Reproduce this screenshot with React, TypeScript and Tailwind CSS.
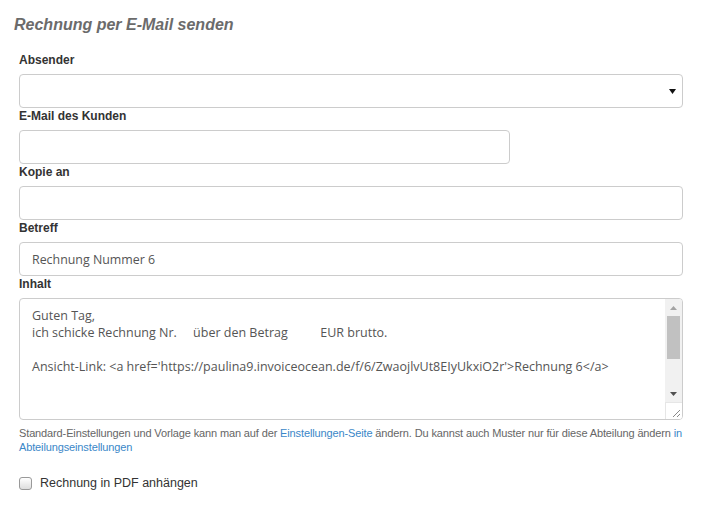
import React from 'react';

const labelCls = "block text-[12px] leading-[14px] font-bold text-[#333] mt-[1px] mb-[7px]";
const inputCls = "block h-[34px] border border-[#ccc] rounded-[4px] bg-white px-[12px] text-[12.4px] text-[#555] font-['Open_Sans',sans-serif] outline-none";

export default function App() {
  return (
    <div className="w-[704px] h-[515px] bg-white font-['Liberation_Sans',Arial,sans-serif] pl-[19px] pr-[21px] pt-[14px]">
      <h2 className="-ml-[5px] text-[16px] leading-[22px] font-bold italic text-[#6b6b6b] mb-[17px]">
        Rechnung per E-Mail senden
      </h2>

      {/* Absender */}
      <label className={labelCls}>Absender</label>
      <div className={`${inputCls} w-full flex items-center justify-end pr-[6px]`}>
        <svg width="7" height="5" viewBox="0 0 7 5"><path d="M0 0h7L3.5 5z" fill="#111" /></svg>
      </div>

      <label className={labelCls}>E-Mail des Kunden</label>
      <input className={`${inputCls} w-[491px]`} defaultValue="" />

      <label className={labelCls}>Kopie an</label>
      <input className={`${inputCls} w-full`} defaultValue="" />

      <label className={labelCls}>Betreff</label>
      <input className={`${inputCls} w-full`} defaultValue="Rechnung Nummer 6" />

      <label className={labelCls}>Inhalt</label>
      <div className="flex h-[122px] border border-[#ccc] rounded-[4px] overflow-hidden">
        <div className="flex-1 px-[12px] pt-[8px] text-[12.5px] leading-[17px] text-[#555] font-['Open_Sans',sans-serif] whitespace-pre">
          {"Guten Tag,\nich schicke Rechnung Nr.     über den Betrag          EUR brutto.\n\nAnsicht-Link: <a href='https://paulina9.invoiceocean.de/f/6/ZwaojlvUt8EIyUkxiO2r'>Rechnung 6</a>"}
        </div>
        <div className="w-[17px] flex flex-col bg-[#f1f1f1]">
          <div className="h-[17px] flex items-center justify-center">
            <svg width="7" height="4" viewBox="0 0 7 4"><path d="M0 4h7L3.5 0z" fill="#a3a3a3" /></svg>
          </div>
          <div className="mx-[2px] h-[43px] bg-[#c1c1c1]" />
          <div className="flex-1" />
          <div className="h-[17px] flex items-center justify-center">
            <svg width="7" height="4" viewBox="0 0 7 4"><path d="M0 0h7L3.5 4z" fill="#505050" /></svg>
          </div>
          <div className="h-[17px] bg-white border-t border-l border-[#e6e6e6] flex items-end justify-end p-[2px]">
            <svg width="8" height="8" viewBox="0 0 8 8"><path d="M8 1L1 8M8 5L5 8" stroke="#888" strokeWidth="1" /></svg>
          </div>
        </div>
      </div>

      <p className="mt-[6px] text-[11px] leading-[14px] text-[#666] tracking-[-0.13px]">
        Standard-Einstellungen und Vorlage kann man auf der <span className="text-[#3a87c8]">Einstellungen-Seite</span> ändern. Du kannst auch Muster nur für diese Abteilung ändern <span className="text-[#3a87c8]">in Abteilungseinstellungen</span>
      </p>

      <label className="mt-[20px] flex items-center gap-[8px] text-[12.5px] text-[#333]">
        <span className="w-[13px] h-[13px] rounded-[3px] border border-[#999] bg-gradient-to-b from-[#fff] to-[#ddd]" />
        Rechnung in PDF anhängen
      </label>
    </div>
  );
}
